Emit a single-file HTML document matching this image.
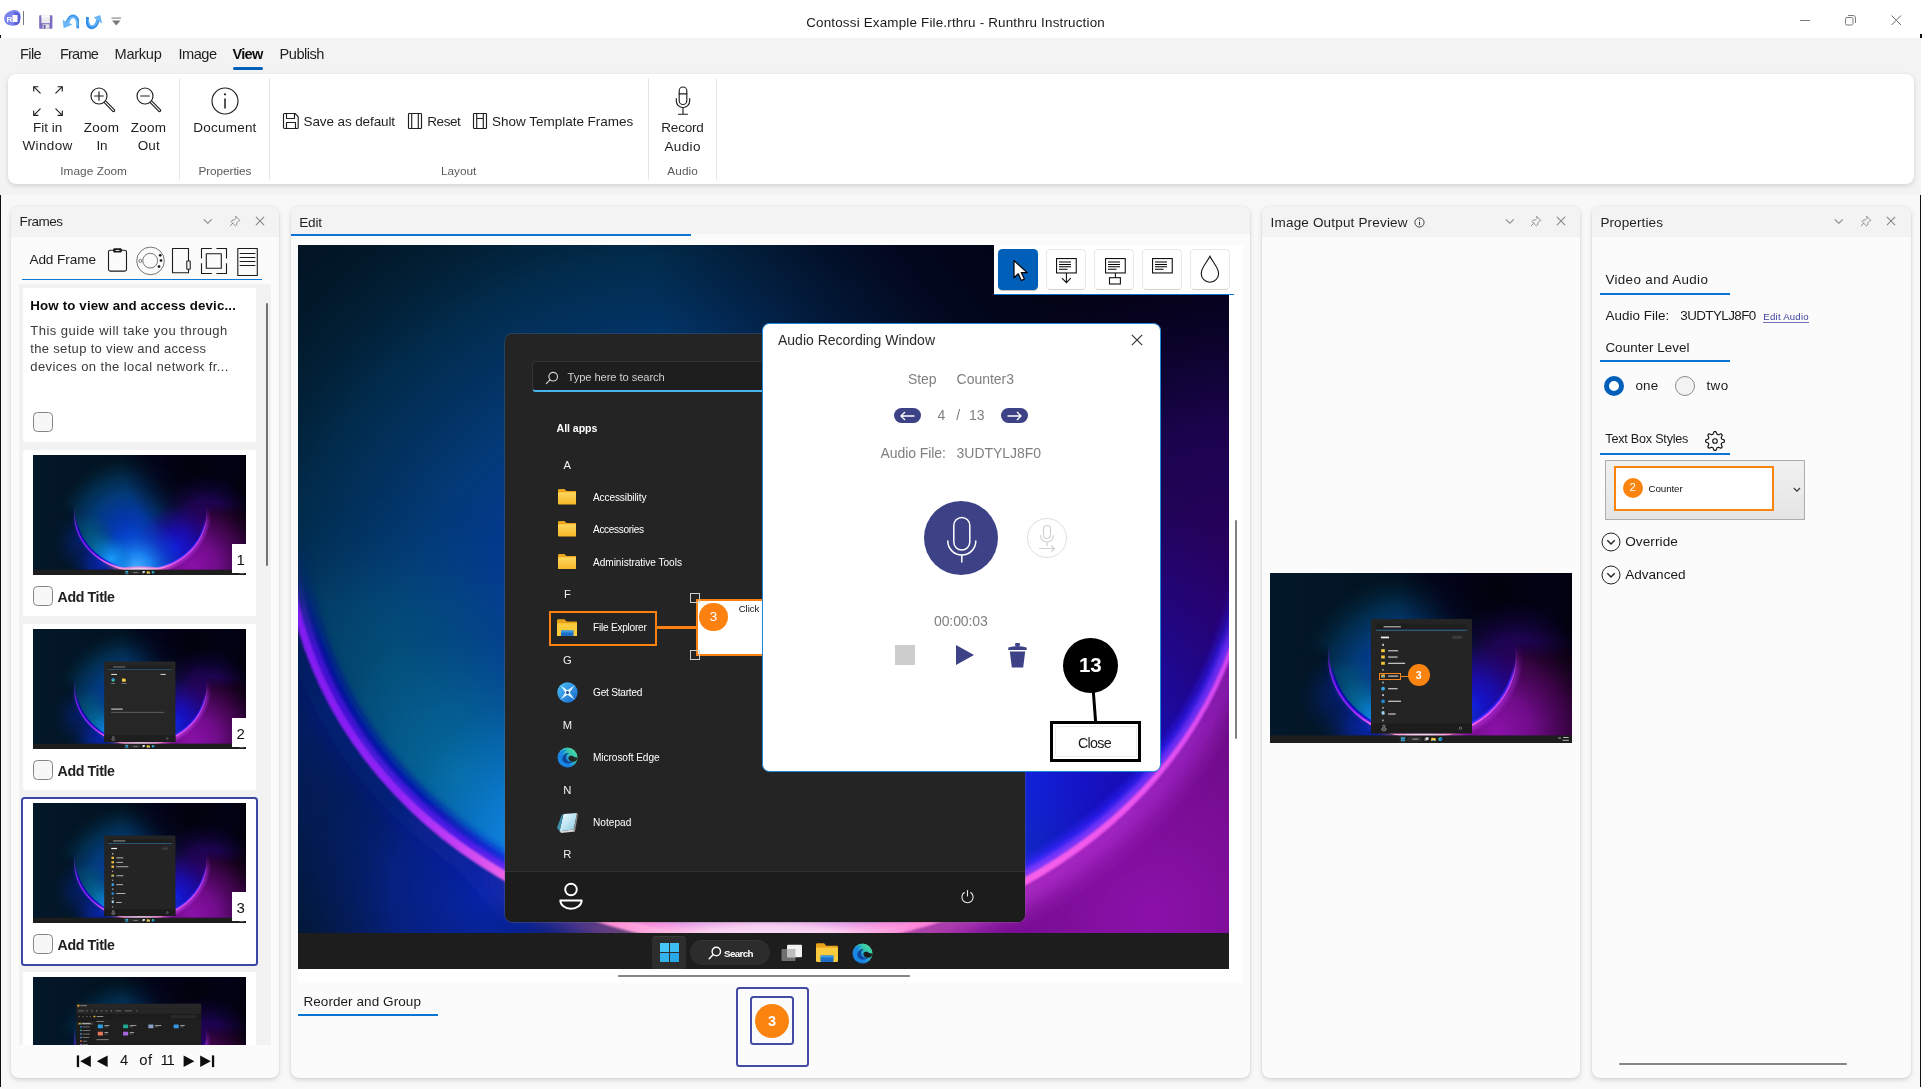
<!DOCTYPE html>
<html lang="en"><head><meta charset="utf-8"><title>Runthru Instruction</title><style>
html,body{margin:0;padding:0}
body{width:1922px;height:1089px;overflow:hidden;position:relative;background:#f3f3f3;font-family:"Liberation Sans",sans-serif;}
.t{position:absolute;white-space:nowrap;line-height:1;}
#app{position:absolute;left:0;top:0;width:1922px;height:1089px;overflow:hidden;will-change:transform;}
</style></head>
<body>
<div id="app">

<svg width="0" height="0" style="position:absolute">
<defs>
  <linearGradient id="wpBase" x1="0" y1="0" x2="1" y2="0">
    <stop offset="0" stop-color="#03182a"/><stop offset=".4" stop-color="#021322"/><stop offset=".62" stop-color="#030618"/><stop offset="1" stop-color="#020105"/>
  </linearGradient>
  <radialGradient id="wpOutL" cx="620" cy="985" r="300" gradientUnits="userSpaceOnUse">
    <stop offset="0" stop-color="#0826b0" stop-opacity=".95"/><stop offset=".4" stop-color="#06228e" stop-opacity=".8"/><stop offset=".75" stop-color="#031c58" stop-opacity=".4"/><stop offset="1" stop-color="#02162e" stop-opacity="0"/>
  </radialGradient>
  <radialGradient id="wpOutR" cx="1440" cy="1010" r="780" gradientUnits="userSpaceOnUse">
    <stop offset="0" stop-color="#8c11aa"/><stop offset=".3" stop-color="#720c8c" stop-opacity=".97"/><stop offset=".6" stop-color="#460452" stop-opacity=".8"/><stop offset="1" stop-color="#15001c" stop-opacity="0"/>
  </radialGradient>
  <radialGradient id="wpIn" cx="860" cy="700" r="700" gradientUnits="userSpaceOnUse">
    <stop offset="0" stop-color="#0434c0"/><stop offset=".25" stop-color="#0438a4"/><stop offset=".5" stop-color="#033a78"/><stop offset=".72" stop-color="#022e50" stop-opacity=".92"/><stop offset=".9" stop-color="#021f32" stop-opacity=".5"/><stop offset="1" stop-color="#021826" stop-opacity="0"/>
  </radialGradient>
  <radialGradient id="wpCy" cx="930" cy="1030" r="470" gradientUnits="userSpaceOnUse">
    <stop offset="0" stop-color="#48b4ff"/><stop offset=".3" stop-color="#1c86f6" stop-opacity=".95"/><stop offset=".65" stop-color="#0a54dc" stop-opacity=".55"/><stop offset="1" stop-color="#0446c0" stop-opacity="0"/>
  </radialGradient>
  <radialGradient id="wpTeal" cx="530" cy="820" r="240" gradientUnits="userSpaceOnUse">
    <stop offset="0" stop-color="#046c8a" stop-opacity=".8"/><stop offset=".5" stop-color="#045e88" stop-opacity=".45"/><stop offset="1" stop-color="#044c84" stop-opacity="0"/>
  </radialGradient>
  <radialGradient id="wpInd" cx="1290" cy="840" r="380" gradientUnits="userSpaceOnUse">
    <stop offset="0" stop-color="#1416dc"/><stop offset=".45" stop-color="#1a0cb4" stop-opacity=".85"/><stop offset="1" stop-color="#20048c" stop-opacity="0"/>
  </radialGradient>
  <radialGradient id="wpPur" cx="1560" cy="640" r="470" gradientUnits="userSpaceOnUse">
    <stop offset="0" stop-color="#30006c" stop-opacity=".95"/><stop offset=".5" stop-color="#22045c" stop-opacity=".8"/><stop offset="1" stop-color="#0a0330" stop-opacity="0"/>
  </radialGradient>
  <linearGradient id="wpRimC" x1="365" y1="0" x2="1570" y2="0" gradientUnits="userSpaceOnUse">
    <stop offset="0" stop-color="#7e1cf0"/><stop offset=".12" stop-color="#9222f8"/><stop offset=".175" stop-color="#c03cf6"/><stop offset=".23" stop-color="#ee62ea"/><stop offset=".33" stop-color="#ff88d4"/><stop offset=".43" stop-color="#ffd0ec"/><stop offset=".5" stop-color="#f0e6ff"/><stop offset=".57" stop-color="#ffd0ec"/><stop offset=".65" stop-color="#ff86d8"/><stop offset=".76" stop-color="#f860e8"/><stop offset=".87" stop-color="#ee56f0"/><stop offset="1" stop-color="#d044f4"/>
  </linearGradient>
  <linearGradient id="wpRimIn" x1="365" y1="0" x2="1570" y2="0" gradientUnits="userSpaceOnUse">
    <stop offset="0" stop-color="#050c94"/><stop offset=".18" stop-color="#0712bc"/><stop offset=".27" stop-color="#1430f8"/><stop offset=".34" stop-color="#4868ff"/><stop offset=".5" stop-color="#a8c8ff"/><stop offset=".66" stop-color="#5858ff"/><stop offset=".73" stop-color="#3a2cff"/><stop offset=".85" stop-color="#2a1cf0"/><stop offset="1" stop-color="#2c14d0"/>
  </linearGradient>
  <linearGradient id="wpFade" x1="0" y1="0" x2="0" y2="1080" gradientUnits="userSpaceOnUse">
    <stop offset="0" stop-color="#000"/><stop offset=".42" stop-color="#000"/><stop offset=".5" stop-color="#666"/><stop offset=".58" stop-color="#fff"/><stop offset="1" stop-color="#fff"/>
  </linearGradient>
  <linearGradient id="wpInFade" x1="0" y1="0" x2="0" y2="1080" gradientUnits="userSpaceOnUse">
    <stop offset="0" stop-color="#fff"/><stop offset=".4" stop-color="#fff"/><stop offset=".5" stop-color="#000"/><stop offset="1" stop-color="#000"/>
  </linearGradient>
  <mask id="wpInMask" maskUnits="userSpaceOnUse" x="0" y="0" width="1920" height="1080"><rect width="1920" height="1080" fill="url(#wpInFade)"/><ellipse cx="967.700" cy="526.900" rx="598" ry="521.500" fill="#fff"/></mask>
  <mask id="wpMask" maskUnits="userSpaceOnUse" x="0" y="0" width="1920" height="1080"><rect width="1920" height="1080" fill="url(#wpFade)"/></mask>
  <clipPath id="wpClip"><ellipse cx="967.700" cy="526.900" rx="598" ry="521.500"/></clipPath>
  <clipPath id="wpOutC"><path clip-rule="evenodd" d="M0 0H1920V1080H0Z M369.700 526.900A598 521.500 0 0 0 1565.700 526.900A598 521.500 0 0 0 369.700 526.900Z"/></clipPath>
  <clipPath id="wpAll"><rect width="1920" height="1080"/></clipPath>
  <filter id="wpB1" filterUnits="userSpaceOnUse" x="-100" y="-100" width="2120" height="1280"><feGaussianBlur stdDeviation="10"/></filter>
  <filter id="wpB2" filterUnits="userSpaceOnUse" x="-100" y="-100" width="2120" height="1280"><feGaussianBlur stdDeviation="1.400"/></filter>
  <filter id="wpB3" filterUnits="userSpaceOnUse" x="-100" y="-100" width="2120" height="1280"><feGaussianBlur stdDeviation="16"/></filter>
  <linearGradient id="wpRimG" x1="365" y1="0" x2="1570" y2="0" gradientUnits="userSpaceOnUse">
    <stop offset="0" stop-color="#0a20b0" stop-opacity=".25"/><stop offset=".2" stop-color="#1a24c8" stop-opacity=".3"/><stop offset=".33" stop-color="#ff88d4" stop-opacity=".6"/><stop offset=".5" stop-color="#f0e6ff" stop-opacity=".8"/><stop offset=".65" stop-color="#ff86d8" stop-opacity=".8"/><stop offset=".76" stop-color="#d040e8" stop-opacity=".85"/><stop offset="1" stop-color="#a428e0" stop-opacity=".8"/>
  </linearGradient>
  <linearGradient id="wpTealS" x1="365" y1="0" x2="1570" y2="0" gradientUnits="userSpaceOnUse">
    <stop offset="0" stop-color="#04587a" stop-opacity=".75"/><stop offset=".1" stop-color="#046a8a" stop-opacity=".9"/><stop offset=".2" stop-color="#087cb0" stop-opacity=".9"/><stop offset=".28" stop-color="#0e8cdc" stop-opacity=".75"/><stop offset=".38" stop-color="#1a98f4" stop-opacity="0"/><stop offset="1" stop-color="#1a98f4" stop-opacity="0"/>
  </linearGradient>
  <radialGradient id="wpBot" cx="968" cy="1046" r="250" gradientUnits="userSpaceOnUse" gradientTransform="translate(0 1046) scale(1 .2) translate(0 -1046)">
    <stop offset="0" stop-color="#f4ecff"/><stop offset=".45" stop-color="#ffd0f0" stop-opacity=".95"/><stop offset=".8" stop-color="#ff80d4" stop-opacity=".7"/><stop offset="1" stop-color="#f060d8" stop-opacity="0"/>
  </radialGradient>
  <filter id="wpB4" filterUnits="userSpaceOnUse" x="-100" y="-100" width="2120" height="1280"><feGaussianBlur stdDeviation="26"/></filter>
  <filter id="wpB5" filterUnits="userSpaceOnUse" x="-100" y="-100" width="2120" height="1280"><feGaussianBlur stdDeviation="5"/></filter>
  <linearGradient id="wpFadeT" x1="0" y1="0" x2="0" y2="1080" gradientUnits="userSpaceOnUse">
    <stop offset="0" stop-color="#000"/><stop offset=".5" stop-color="#000"/><stop offset=".56" stop-color="#555"/><stop offset=".63" stop-color="#fff"/><stop offset="1" stop-color="#fff"/>
  </linearGradient>
  <mask id="wpMaskT" maskUnits="userSpaceOnUse" x="0" y="0" width="1920" height="1080"><rect width="1920" height="1080" fill="url(#wpFadeT)"/></mask>
  <radialGradient id="wpT1" cx="510" cy="715" r="230" gradientUnits="userSpaceOnUse">
    <stop offset="0" stop-color="#045a7a" stop-opacity=".7"/><stop offset=".5" stop-color="#04567a" stop-opacity=".4"/><stop offset="1" stop-color="#044c78" stop-opacity="0"/>
  </radialGradient>
  <radialGradient id="wpT2" cx="585" cy="840" r="180" gradientUnits="userSpaceOnUse">
    <stop offset="0" stop-color="#0674a0" stop-opacity=".85"/><stop offset=".5" stop-color="#066c9c" stop-opacity=".5"/><stop offset="1" stop-color="#065c94" stop-opacity="0"/>
  </radialGradient>
  <radialGradient id="wpT3" cx="705" cy="935" r="200" gradientUnits="userSpaceOnUse">
    <stop offset="0" stop-color="#1c9cff" stop-opacity=".98"/><stop offset=".5" stop-color="#0e88e4" stop-opacity=".6"/><stop offset="1" stop-color="#086cc4" stop-opacity="0"/>
  </radialGradient>
  <radialGradient id="wpTopR" cx="1450" cy="100" r="640" gradientUnits="userSpaceOnUse">
    <stop offset="0" stop-color="#02020c" stop-opacity=".96"/><stop offset=".5" stop-color="#03031a" stop-opacity=".82"/><stop offset="1" stop-color="#03031a" stop-opacity="0"/>
  </radialGradient>
  <linearGradient id="wpRimV" x1="365" y1="0" x2="1570" y2="0" gradientUnits="userSpaceOnUse">
    <stop offset="0" stop-color="#4a10d8"/><stop offset=".18" stop-color="#5614ec"/><stop offset=".27" stop-color="#8a30f8"/><stop offset=".34" stop-color="#f890e0"/><stop offset=".5" stop-color="#f4e8ff"/><stop offset=".66" stop-color="#f890e4"/><stop offset=".74" stop-color="#8a3cff"/><stop offset="1" stop-color="#6a2cf4"/>
  </linearGradient>
  <filter id="wpB6" filterUnits="userSpaceOnUse" x="-100" y="-100" width="2120" height="1280"><feGaussianBlur stdDeviation="3.500"/></filter>
  <radialGradient id="wpOutL2" cx="470" cy="790" r="300" gradientUnits="userSpaceOnUse">
    <stop offset="0" stop-color="#04228c" stop-opacity=".8"/><stop offset=".45" stop-color="#032070" stop-opacity=".55"/><stop offset="1" stop-color="#021a40" stop-opacity="0"/>
  </radialGradient>
  <symbol id="wp" viewBox="0 0 1920 1080" preserveAspectRatio="none">
   <g clip-path="url(#wpAll)">
    <rect width="1920" height="1080" fill="url(#wpBase)"/>
    <g clip-path="url(#wpOutC)">
      <rect width="1920" height="1080" fill="url(#wpOutL2)"/><rect width="1920" height="1080" fill="url(#wpOutL)"/>
      <rect width="1920" height="1080" fill="url(#wpOutR)"/>
      <g mask="url(#wpMask)">
        <ellipse cx="967.700" cy="526.900" rx="606" ry="530" fill="none" stroke="url(#wpRimG)" stroke-width="26" filter="url(#wpB3)"/>
      </g>
    </g>
    <g mask="url(#wpInMask)">
      <rect width="1920" height="1080" fill="url(#wpIn)"/>
      <rect width="1920" height="1080" fill="url(#wpTopR)"/>
      <rect width="1920" height="1080" fill="url(#wpPur)"/>
      <rect width="1920" height="1080" fill="url(#wpInd)"/>
      <rect width="1920" height="1080" fill="url(#wpCy)"/>
    </g>
    <g clip-path="url(#wpClip)"><g mask="url(#wpMask)">
        <rect width="1920" height="1080" fill="url(#wpT1)"/><rect width="1920" height="1080" fill="url(#wpT2)"/><rect width="1920" height="1080" fill="url(#wpT3)"/>
        <g mask="url(#wpMaskT)"><ellipse cx="971" cy="526.900" rx="584" ry="504" fill="none" stroke="url(#wpRimIn)" stroke-width="17" filter="url(#wpB5)" opacity=".95"/>
        <ellipse cx="970" cy="526.900" rx="590.500" ry="510.500" fill="none" stroke="url(#wpRimV)" stroke-width="10" filter="url(#wpB6)"/></g>
        <rect x="600" y="960" width="740" height="120" fill="url(#wpBot)"/>
    </g></g>
    <g mask="url(#wpMask)">
      <path fill-rule="evenodd" fill="url(#wpRimC)" filter="url(#wpB2)" d="M367.700 526.900A600.250 525.500 0 0 0 1568.200 526.900A600.250 525.500 0 0 0 367.700 526.900Z M376.700 526.900A593.250 513.500 0 0 0 1563.200 526.900A593.250 513.500 0 0 0 376.700 526.900Z"/>
    </g>
   </g>
  </symbol>
</defs>
</svg>

<svg width="0" height="0" style="position:absolute"><defs>
  <symbol id="tb" viewBox="0 0 1920 1080" preserveAspectRatio="none">
    <rect x="0" y="1032" width="1920" height="48" fill="#1d1d1d"/>
    <rect x="824" y="1034" width="41" height="44" rx="5" fill="#2e2e2e"/>
    <rect x="833" y="1044" width="11" height="11" fill="#3cc2f4"/><rect x="846" y="1044" width="11" height="11" fill="#35b8f0"/><rect x="833" y="1057" width="11" height="11" fill="#2eaeea"/><rect x="846" y="1057" width="11" height="11" fill="#28a6e6"/>
    <rect x="870" y="1040" width="99" height="31" rx="15.500" fill="#2d2d2d"/>
    <rect x="905" y="1052" width="40" height="7" rx="2" fill="#8a8a8a"/>
    <rect x="982" y="1050" width="18" height="16" fill="#7d7d7d"/><rect x="990" y="1044" width="18" height="16" fill="#e6e6e6"/>
    <path d="M1026 1046h10l3 3h13v18h-26z" fill="#f0b823"/><rect x="1026" y="1052" width="26" height="15" fill="#fbd34f"/><rect x="1032" y="1061" width="14" height="6" fill="#1e73c8"/>
    <circle cx="1083" cy="1056" r="12.500" fill="#1c78d0"/><path d="M1072 1060a11 11 0 0 1 22-8c-3-5-12-5-15 0s1 11 6 11c-6 3-11 1-13-3z" fill="#46d27a"/>
    <rect x="1832" y="1046" width="18" height="5" fill="#ddd"/><rect x="1864" y="1043" width="34" height="5" fill="#ddd"/><rect x="1860" y="1060" width="40" height="5" fill="#ddd"/>
  </symbol>
  <symbol id="smA" viewBox="0 0 1920 1080" preserveAspectRatio="none">
    <rect x="642" y="292" width="642" height="726" rx="9" fill="#242424"/>
    <rect x="642" y="956" width="642" height="62" fill="#1c1c1c"/><rect x="642" y="1005" width="642" height="13" rx="9" fill="#1c1c1c"/>
    <rect x="675" y="326" width="576" height="38" rx="4" fill="#1e1e1e"/><rect x="675" y="361" width="576" height="4" fill="#3aa0dc"/>
    <rect x="722" y="337" width="110" height="9" fill="#9a9a9a"/>
    <rect x="705" y="404" width="52" height="11" fill="#f0f0f0"/><rect x="1160" y="398" width="60" height="22" rx="4" fill="#3a3a3a"/>
    <rect x="714" y="450" width="10" height="13" fill="#e0e0e0"/>
    <g fill="#f7c83c"><rect x="707" y="484" width="23" height="19"/><rect x="707" y="524" width="23" height="19"/><rect x="707" y="564" width="23" height="19"/><rect x="707" y="645" width="23" height="19"/></g>
    <rect x="711" y="656" width="15" height="8" fill="#2a7fd4"/>
    <g fill="#c4c4c4"><rect x="751" y="490" width="64" height="8"/><rect x="751" y="530" width="60" height="8"/><rect x="751" y="570" width="108" height="8"/><rect x="751" y="651" width="64" height="8"/><rect x="751" y="731" width="60" height="8"/><rect x="751" y="811" width="82" height="8"/><rect x="751" y="892" width="48" height="8"/>
      <rect x="714" y="610" width="8" height="11"/><rect x="714" y="690" width="9" height="11"/><rect x="713" y="770" width="12" height="11"/><rect x="714" y="851" width="9" height="11"/><rect x="714" y="931" width="8" height="11"/></g>
    <circle cx="719" cy="735" r="12" fill="#3aa8f0"/><circle cx="719" cy="815" r="12" fill="#1f8ad8"/><path d="M708 880l18-4 4 22-18 4z" fill="#9fd0e8"/>
    <circle cx="724" cy="975" r="8" fill="none" stroke="#fff" stroke-width="3"/><path d="M709 990h30a15 13 0 0 1-30 0z" fill="none" stroke="#fff" stroke-width="3"/>
    <circle cx="1211" cy="986" r="8" fill="none" stroke="#e0e0e0" stroke-width="2.500"/>
  </symbol>
  <symbol id="smP" viewBox="0 0 1920 1080" preserveAspectRatio="none">
    <rect x="642" y="292" width="642" height="726" rx="9" fill="#262626"/>
    <rect x="642" y="956" width="642" height="62" fill="#1e1e1e"/><rect x="642" y="1005" width="642" height="13" rx="9" fill="#1e1e1e"/>
    <rect x="675" y="326" width="576" height="38" rx="4" fill="#202020"/><rect x="675" y="361" width="576" height="4" fill="#2c86b8"/>
    <rect x="722" y="337" width="110" height="9" fill="#7a7a7a"/>
    <rect x="705" y="404" width="52" height="10" fill="#d8d8d8"/><rect x="1150" y="404" width="46" height="10" fill="#c8c8c8"/>
    <circle cx="722" cy="458" r="16" fill="#2a8fdc"/><path d="M710 462a12 12 0 0 0 24-6c-4-4-14-3-16 3z" fill="#49d080"/>
    <path d="M804 444h12l4 4h14v24h-30z" fill="#f3bf2c"/><rect x="804" y="454" width="30" height="18" fill="#fbd654"/>
    <rect x="704" y="488" width="36" height="6" fill="#9a9a9a"/><rect x="798" y="488" width="44" height="6" fill="#9a9a9a"/>
    <rect x="705" y="716" width="104" height="10" fill="#c8c8c8"/><rect x="705" y="746" width="480" height="7" fill="#6e6e6e"/>
    <circle cx="724" cy="975" r="8" fill="none" stroke="#ddd" stroke-width="3"/><path d="M709 990h30a15 13 0 0 1-30 0z" fill="none" stroke="#ddd" stroke-width="3"/>
    <circle cx="1211" cy="986" r="8" fill="none" stroke="#ccc" stroke-width="2.500"/>
  </symbol>
  <symbol id="feW" viewBox="0 0 1920 1080" preserveAspectRatio="none">
    <rect x="392" y="240" width="1124" height="800" rx="8" fill="#1f1f1f"/>
    <rect x="392" y="240" width="1124" height="40" rx="8" fill="#272727"/>
    <rect x="400" y="250" width="18" height="16" fill="#f0b823"/><rect x="426" y="254" width="60" height="8" fill="#8a8a8a"/>
    <rect x="392" y="280" width="1124" height="52" fill="#262626"/>
    <g fill="#6a6a6a"><rect x="408" y="300" width="50" height="9"/><rect x="480" y="298" width="12" height="13"/><rect x="524" y="298" width="12" height="13"/><rect x="568" y="298" width="12" height="13"/><rect x="612" y="298" width="12" height="13"/><rect x="656" y="298" width="12" height="13"/><rect x="700" y="298" width="12" height="13"/><rect x="744" y="300" width="50" height="9"/><rect x="830" y="300" width="60" height="9"/><rect x="930" y="300" width="14" height="9"/></g>
    <rect x="392" y="332" width="1124" height="48" fill="#1c1c1c"/>
    <g fill="#7a7a7a"><rect x="410" y="352" width="10" height="9"/><rect x="446" y="352" width="10" height="9"/><rect x="482" y="352" width="10" height="9"/><rect x="512" y="352" width="10" height="9"/></g>
    <rect x="546" y="349" width="16" height="14" fill="#f0b823"/><rect x="574" y="352" width="60" height="8" fill="#9a9a9a"/>
    <rect x="1240" y="344" width="230" height="26" rx="3" fill="#2a2a2a"/>
    <rect x="392" y="380" width="160" height="660" fill="#1c1c1c"/>
    <rect x="398" y="408" width="148" height="24" rx="3" fill="#3a3a3a"/><rect x="414" y="414" width="16" height="12" fill="#f0b823"/><rect x="440" y="416" width="80" height="8" fill="#c8c8c8"/>
    <g fill="#8a8a8a"><rect x="448" y="446" width="62" height="7"/><rect x="448" y="478" width="70" height="7"/><rect x="448" y="510" width="66" height="7"/><rect x="448" y="542" width="58" height="7"/><rect x="448" y="574" width="40" height="7"/><rect x="448" y="606" width="48" height="7"/><rect x="448" y="638" width="44" height="7"/></g>
    <g><rect x="424" y="442" width="16" height="13" fill="#2a8fdc"/><rect x="424" y="474" width="16" height="13" fill="#3aa0a0"/><rect x="424" y="506" width="16" height="13" fill="#6a8ad0"/><rect x="424" y="538" width="16" height="13" fill="#3a90d8"/><rect x="424" y="570" width="16" height="13" fill="#e07050"/><rect x="424" y="602" width="16" height="13" fill="#a060d8"/><rect x="424" y="634" width="16" height="13" fill="#f0b823"/></g>
    <rect x="572" y="396" width="70" height="8" fill="#8a8a8a"/>
    <rect x="584" y="428" width="46" height="34" rx="3" fill="#2a9fe0"/><rect x="644" y="432" width="44" height="7" fill="#bbb"/><rect x="644" y="446" width="30" height="6" fill="#777"/>
    <rect x="812" y="428" width="46" height="34" rx="3" fill="#20a890"/><rect x="872" y="432" width="60" height="7" fill="#bbb"/><rect x="872" y="446" width="30" height="6" fill="#777"/>
    <rect x="1040" y="428" width="46" height="34" rx="3" fill="#8aa0c8"/><rect x="1100" y="432" width="56" height="7" fill="#bbb"/><rect x="1100" y="446" width="30" height="6" fill="#777"/>
    <rect x="1268" y="428" width="46" height="34" rx="3" fill="#3a96e0"/><rect x="1328" y="432" width="40" height="7" fill="#bbb"/><rect x="1328" y="446" width="30" height="6" fill="#777"/>
    <rect x="584" y="492" width="46" height="34" rx="3" fill="#e87858"/><rect x="644" y="496" width="34" height="7" fill="#bbb"/><rect x="644" y="510" width="30" height="6" fill="#777"/>
    <rect x="812" y="492" width="46" height="34" rx="3" fill="#a868e0"/><rect x="872" y="496" width="40" height="7" fill="#bbb"/><rect x="872" y="510" width="30" height="6" fill="#777"/>
    <rect x="572" y="560" width="110" height="8" fill="#8a8a8a"/>
  </symbol>
</defs></svg>
<div style="position:absolute;left:0px;top:0px;width:1922px;height:38px;background:#fff"></div>
<svg style="position:absolute;left:3px;top:9px;" width="19" height="18" viewBox="0 0 19 18">
      <path d="M9.5 1.2c3-.9 6.6.3 7.6 3.4.9 2.6.3 5.4-.2 8-.4 2.200-2.600 3.600-4.800 3.900-2.800.4-6 .2-8.400-1.500C1.600 13.500 1 10.800 1.300 8.300 1.600 4.700 5.800 2.300 9.500 1.200z" fill="#7a84ec"/>
      <path d="M11.200 3.200c2.200-.5 4.900.3 5.700 2.600.7 2.300.3 4.900-.2 7.200-.4 1.700-2 2.800-3.700 3-1.100.1-2 .1-1.800-1z" fill="#5a62d8"/>
      <rect x="9.500" y="6" width="5" height="7" rx=".6" fill="#fff"/>
      <text x="3.600" y="12.600" font-family="Liberation Sans, sans-serif" font-size="8" font-weight="700" fill="#fff">R</text></svg>
<div style="position:absolute;left:23px;top:11px;width:1px;height:14px;background:#7a7a7a"></div>
<svg style="position:absolute;left:39.4px;top:15px;" width="14" height="14" viewBox="0 0 14 14"><rect x=".2" y=".2" width="13.200" height="13.500" rx=".8" fill="#7a6cc2"/><rect x="2.400" y=".2" width="8.500" height="8" fill="#ececec"/><rect x="2.400" y=".2" width="8.500" height="2.500" fill="#f8f8f8"/><rect x="3.600" y="9.200" width="6.800" height="4.500" fill="#e2e2e2"/><rect x="4.600" y="9.900" width="1.900" height="3.800" fill="#6a5cb0"/></svg>
<svg style="position:absolute;left:61.5px;top:14px;" width="17.5" height="15.5" viewBox="0 0 17.5 15.5"><path d="M5.500 8.300Q8 1.200 12.200 2.400Q16.600 4.200 16 12.600" fill="none" stroke="#3f98ec" stroke-width="3.600" stroke-linecap="round"/><path d="M5.600 8.600Q8.300 2.600 12 3.600Q15 5 15.300 11" fill="none" stroke="#7cc2f8" stroke-width="1.600" stroke-linecap="round"/><path d="M1.700 14.200L.6 6L10.400 10.400z" fill="#6ab6f6"/></svg>
<svg style="position:absolute;left:85.5px;top:14px;" width="17.5" height="15.5" viewBox="0 0 17.5 15.5"><path d="M11.900 6.800Q9.500 14.200 4.800 13.400Q1 12 1.300 4.400" fill="none" stroke="#2f8ce8" stroke-width="3.400" stroke-linecap="round"/><path d="M11.600 7.200Q9.300 12.600 5.200 12Q2.600 11 2.300 6" fill="none" stroke="#6cb8f6" stroke-width="1.400" stroke-linecap="round"/><path d="M14.200 1L7.600 3.400L16.200 9.800z" fill="#6ab6f6"/></svg>
<svg style="position:absolute;left:111px;top:16px;" width="11" height="10" viewBox="0 0 11 10"><rect x=".5" y="1.500" width="9.500" height="1.200" fill="#8a8a8a"/><path d="M1 4.500h8.500L5.250 9.500z" fill="#7a7a7a"/></svg>
<span id="t1" class="t " style="left:806.2px;top:15.5px;font-size:13.4px;color:#1a1a1a;letter-spacing:0.189px;">Contossi Example File.rthru - Runthru Instruction</span>
<svg style="position:absolute;left:1798px;top:12px;" width="110" height="16" viewBox="0 0 110 16"><g fill="none" stroke="#7d7d7d" stroke-width="1">
      <path d="M2 8.500h10"/>
      <rect x="47.500" y="5.500" width="7.500" height="7.500" rx="1.500"/><path d="M50 3.500h5a2.500 2.500 0 0 1 2.500 2.500v5"/>
      <path d="M93.500 3.500l9.500 9.500M103 3.500l-9.500 9.500" stroke="#6a6a6a"/></g></svg>
<div style="position:absolute;left:0px;top:38px;width:1922px;height:1051px;background:#f3f3f3"></div>
<span id="t2" class="t " style="left:20.0px;top:46.6px;font-size:14.6px;color:#1f1f1f;letter-spacing:-0.629px;">File</span>
<span id="t3" class="t " style="left:60.0px;top:46.6px;font-size:14.6px;color:#1f1f1f;letter-spacing:-0.834px;">Frame</span>
<span id="t4" class="t " style="left:114.5px;top:46.6px;font-size:14.6px;color:#1f1f1f;letter-spacing:-0.279px;">Markup</span>
<span id="t5" class="t " style="left:178.5px;top:46.6px;font-size:14.6px;color:#1f1f1f;letter-spacing:-0.512px;">Image</span>
<span id="t6" class="t " style="left:279.5px;top:46.6px;font-size:14.6px;color:#1f1f1f;letter-spacing:-0.482px;">Publish</span>
<span id="t7" class="t " style="left:232.5px;top:46.6px;font-size:14.6px;color:#101010;font-weight:700;letter-spacing:-0.750px;">View</span>
<div style="position:absolute;left:232.5px;top:67px;width:30.5px;height:2.5px;background:#005fb8;border-radius:1.5px"></div>
<div style="position:absolute;left:0px;top:195px;width:1922px;height:894px;background:#f8f8f8"></div>
<div style="position:absolute;left:8px;top:74px;width:1906px;height:110px;background:#fff;border-radius:8px;box-shadow:0 2px 5px rgba(0,0,0,.13),0 0 1px rgba(0,0,0,.08)"></div>
<svg style="position:absolute;left:30px;top:83px;" width="36" height="36" viewBox="0 0 36 36"><g fill="none" stroke="#1f1f1f" stroke-width="1.15" stroke-linecap="round" stroke-linejoin="round">
      <path d="M10.200 10.200L3.700 3.700M3.700 8V3.700H8"/>
      <path d="M25.800 10.200l6.500-6.500M28 3.700h4.300V8"/>
      <path d="M10.200 25.800l-6.500 6.500M3.700 28v4.300H8"/>
      <path d="M25.800 25.800l6.500 6.500M28 32.300h4.300V28"/></g></svg>
<span id="t8" class="t " style="left:33.0px;top:120.6px;font-size:13.5px;color:#1f1f1f;letter-spacing:0.022px;">Fit in</span>
<span id="t9" class="t " style="left:22.5px;top:139.1px;font-size:13.5px;color:#1f1f1f;letter-spacing:0.364px;">Window</span>
<svg style="position:absolute;left:89.5px;top:87px;" width="28" height="28" viewBox="0 0 28 28"><g fill="none" stroke="#1f1f1f" stroke-width="1.15" stroke-linecap="round" stroke-linejoin="round"><circle cx="9" cy="9" r="8"/><path d="M4.700 9h8.600M9 4.700v8.600"/>
          <path d="M14.300 15.600l8.300 8.600a1.100 1.100 0 0 0 1.700-1.600l-8.400-8.500"/></g></svg>
<span id="t10" class="t " style="left:83.7px;top:120.6px;font-size:13.5px;color:#1f1f1f;letter-spacing:0.271px;">Zoom</span>
<span id="t11" class="t " style="left:96.5px;top:139.1px;font-size:13.5px;color:#1f1f1f;letter-spacing:-0.233px;">In</span>
<svg style="position:absolute;left:136.4px;top:87px;" width="28" height="28" viewBox="0 0 28 28"><g fill="none" stroke="#1f1f1f" stroke-width="1.15" stroke-linecap="round" stroke-linejoin="round"><circle cx="9" cy="9" r="8"/><path d="M4.700 9h8.600"/>
          <path d="M14.300 15.600l8.300 8.600a1.100 1.100 0 0 0 1.700-1.600l-8.400-8.500"/></g></svg>
<span id="t12" class="t " style="left:130.7px;top:120.6px;font-size:13.5px;color:#1f1f1f;letter-spacing:0.271px;">Zoom</span>
<span id="t13" class="t " style="left:137.7px;top:139.1px;font-size:13.5px;color:#1f1f1f;letter-spacing:0.178px;">Out</span>
<span id="t14" class="t " style="left:60.3px;top:165.8px;font-size:11.8px;color:#5a5a5a;letter-spacing:0.047px;">Image Zoom</span>
<div style="position:absolute;left:179px;top:78px;width:1px;height:102px;background:#e6e6e6"></div>
<svg style="position:absolute;left:210px;top:86px;" width="30" height="30" viewBox="0 0 30 30"><g fill="none" stroke="#1f1f1f" stroke-width="1.15" stroke-linecap="round" stroke-linejoin="round"><circle cx="15" cy="15" r="13"/><path d="M15 13v9" stroke-width="1.500"/></g><circle cx="15" cy="8.300" r="1.100" fill="#1f1f1f"/></svg>
<span id="t15" class="t " style="left:193.3px;top:120.6px;font-size:13.5px;color:#1f1f1f;letter-spacing:0.221px;">Document</span>
<span id="t16" class="t " style="left:198.5px;top:165.8px;font-size:11.8px;color:#5a5a5a;letter-spacing:-0.088px;">Properties</span>
<div style="position:absolute;left:269px;top:78px;width:1px;height:102px;background:#e6e6e6"></div>
<svg style="position:absolute;left:282px;top:112px;" width="18" height="18" viewBox="0 0 18 18"><g fill="none" stroke="#1f1f1f" stroke-width="1.15" stroke-linecap="round" stroke-linejoin="round"><path d="M1.500 2.500a1 1 0 0 1 1-1H13l3.200 3.200V15.500a1 1 0 0 1-1 1H2.500a1 1 0 0 1-1-1z"/><path d="M4.500 1.500v5h8v-5M4.500 16.500v-6h9v6"/></g></svg>
<span id="t17" class="t " style="left:303.5px;top:114.8px;font-size:13.5px;color:#1f1f1f;letter-spacing:-0.105px;">Save as default</span>
<svg style="position:absolute;left:407px;top:112px;" width="16" height="18" viewBox="0 0 16 18"><g fill="none" stroke="#1f1f1f" stroke-width="1.15" stroke-linecap="round" stroke-linejoin="round"><rect x="1.500" y="1.500" width="13" height="15" rx=".8"/><path d="M4.700 1.500v15M11.300 1.500v15"/></g></svg>
<span id="t18" class="t " style="left:427.3px;top:114.8px;font-size:13.5px;color:#1f1f1f;letter-spacing:-0.456px;">Reset</span>
<svg style="position:absolute;left:472px;top:112px;" width="16" height="18" viewBox="0 0 16 18"><g fill="none" stroke="#1f1f1f" stroke-width="1.15" stroke-linecap="round" stroke-linejoin="round"><rect x="1.500" y="1.500" width="13" height="15" rx=".8"/><path d="M4.700 1.500v15M11.300 1.500v15M4.700 6.500h6.600"/></g></svg>
<span id="t19" class="t " style="left:492.0px;top:114.8px;font-size:13.5px;color:#1f1f1f;letter-spacing:-0.013px;">Show Template Frames</span>
<span id="t20" class="t " style="left:441.0px;top:165.8px;font-size:11.8px;color:#5a5a5a;letter-spacing:-0.020px;">Layout</span>
<div style="position:absolute;left:647.5px;top:78px;width:1px;height:102px;background:#e6e6e6"></div>
<svg style="position:absolute;left:673px;top:85px;" width="20" height="32" viewBox="0 0 20 32"><g fill="none" stroke="#1f1f1f" stroke-width="1.15" stroke-linecap="round" stroke-linejoin="round"><rect x="6.200" y="2" width="7.600" height="17.500" rx="3.800"/><path d="M6.200 8.800h7.600"/><path d="M3.300 13.500v2.300a6.700 6.700 0 0 0 13.400 0v-2.300M10 22.500v6.700M5.500 29.200h9"/></g></svg>
<span id="t21" class="t " style="left:661.3px;top:120.8px;font-size:13.5px;color:#1f1f1f;letter-spacing:-0.189px;">Record</span>
<span id="t22" class="t " style="left:664.4px;top:139.6px;font-size:13.5px;color:#1f1f1f;letter-spacing:0.374px;">Audio</span>
<span id="t23" class="t " style="left:667.3px;top:165.8px;font-size:11.8px;color:#5a5a5a;letter-spacing:0.102px;">Audio</span>
<div style="position:absolute;left:716px;top:78px;width:1px;height:102px;background:#e6e6e6"></div><div style="position:absolute;left:11px;top:206px;width:268px;height:872px;background:#fbfbfb;border-radius:8px;box-shadow:0 2px 5px rgba(0,0,0,.14),0 0 1.500px rgba(0,0,0,.10)"></div>
<div style="position:absolute;left:11px;top:206px;width:268px;height:30.5px;background:#f3f3f3;border-radius:8px 8px 0 0"></div>
<span id="t24" class="t " style="left:19.6px;top:215.3px;font-size:13.5px;color:#1f1f1f;letter-spacing:-0.461px;">Frames</span>
<svg style="position:absolute;left:203px;top:217.5px;" width="10" height="7" viewBox="0 0 10 7"><path d="M.8 1.300L4.800 5.300 8.800 1.300" fill="none" stroke="#878787" stroke-width="1.100"/></svg><svg style="position:absolute;left:228.5px;top:215px;" width="12" height="12" viewBox="0 0 12 12"><g fill="none" stroke="#878787" stroke-width=".9" stroke-linejoin="round"><path d="M6.600 1.200l4.200 4.200-1.100.5-1.700 1.700-.4 2.400-1.300.9L2.100 6.600l.9-1.300 2.400-.4L7.100 3.200z"/><path d="M4.200 7.800L1 11"/></g></svg><svg style="position:absolute;left:255px;top:216px;" width="10" height="10" viewBox="0 0 10 10"><path d="M.9.900l8.200 8.200M9.100.9L.9 9.100" fill="none" stroke="#878787" stroke-width="1.050"/></svg>
<span id="t25" class="t " style="left:29.4px;top:253.2px;font-size:13.6px;color:#1b1b1b;letter-spacing:-0.072px;">Add Frame</span>
<svg style="position:absolute;left:107px;top:247px;" width="22" height="26" viewBox="0 0 22 26"><g fill="none" stroke="#1b1b1b" stroke-width="1.100" stroke-linejoin="round"><rect x="1.500" y="3.300" width="18" height="20.800" rx="1.800"/><rect x="6.800" y="1.900" width="7.400" height="3" rx=".5" fill="#1b1b1b"/><rect x="8.600" y="3" width="3.800" height=".9" fill="#fff" stroke="none"/></g></svg>
<svg style="position:absolute;left:134.5px;top:246px;" width="31" height="30" viewBox="0 0 31 30"><g fill="none" stroke="#4a4a4a" stroke-width=".75"><circle cx="15.500" cy="14.900" r="13.800"/><circle cx="15.200" cy="14.700" r="7.400"/><circle cx="5.400" cy="14.900" r="1.500"/></g><g fill="#111"><circle cx="25.200" cy="9.300" r="1.350"/><circle cx="26" cy="14.500" r="1.350"/><circle cx="24" cy="20.600" r="1.350"/></g></svg>
<svg style="position:absolute;left:171px;top:247px;" width="22" height="27" viewBox="0 0 22 27"><g fill="none" stroke="#1b1b1b" stroke-width="1.100" stroke-linejoin="round"><path d="M17.500 14V1.500H1.500v24.200h16V21.500"/><rect x="15.800" y="14" width="3.400" height="8.300" rx=".5" fill="#fff"/></g></svg>
<svg style="position:absolute;left:200px;top:247px;" width="28" height="28" viewBox="0 0 28 28"><g fill="none" stroke="#1b1b1b" stroke-width="1.100" stroke-linejoin="round"><rect x="6.300" y="6.800" width="15" height="14.500"/><path d="M1.500 11.600v-10.100h10.300M16.400 1.500h10.100v10.100M26.500 16.200v10.300h-10.100M11.800 26.500h-10.300v-10.300"/></g></svg>
<svg style="position:absolute;left:235.7px;top:247px;" width="23" height="30" viewBox="0 0 23 30"><g fill="none" stroke="#1b1b1b" stroke-width="1.100" stroke-linejoin="round"><rect x="1.800" y="1.500" width="19.500" height="27"/><path d="M3.700 6.400h15.700M3.700 10.500h15.700M3.700 14.500h15.700M3.700 18.400h15.700" stroke-width="1.050"/></g></svg>
<div style="position:absolute;left:22px;top:279px;width:240px;height:1.3px;background:#0a7ad6"></div>
<div style="position:absolute;left:19px;top:284px;width:252px;height:761px;background:#f2f2f2"></div>
<div style="position:absolute;left:23px;top:288px;width:233.3px;height:154px;background:#fff;border-radius:2px"></div>
<span id="t26" class="t " style="left:30.3px;top:298.5px;font-size:13.3px;color:#0a0a0a;font-weight:700;letter-spacing:0.151px;">How to view and access devic...</span>
<span id="t27" class="t " style="left:30.3px;top:323.5px;font-size:13px;color:#3a3a3a;letter-spacing:0.481px;">This guide will take you through</span>
<span id="t28" class="t " style="left:30.3px;top:342.0px;font-size:13px;color:#3a3a3a;letter-spacing:0.324px;">the setup to view and access</span>
<span id="t29" class="t " style="left:30.3px;top:360.4px;font-size:13px;color:#3a3a3a;letter-spacing:0.398px;">devices on the local network fr...</span>
<div style="position:absolute;left:33px;top:412.2px;width:18.2px;height:18.2px;border:1px solid #858585;border-radius:4.500px;background:#f7f7f7"></div>
<div style="position:absolute;left:266.3px;top:303px;width:2.2px;height:262.6px;background:#727272;border-radius:1px"></div>
<div style="position:absolute;left:23px;top:450px;width:233.3px;height:166px;background:#fff;border-radius:2px"></div>
<div style="position:absolute;left:33px;top:455px;width:213px;height:120px;overflow:hidden;background:#03101c"><svg width="213" height="120" style="position:absolute;left:0;top:0"><use href="#wp" width="213" height="120"/><use href="#tb" width="213" height="120"/></svg><div style="position:absolute;right:0;bottom:2.300px;width:14.200px;height:28.500px;background:#fff"></div></div><span id="t30" class="t " style="left:236.4px;top:551.9px;font-size:15px;color:#111;">1</span>
<div style="position:absolute;left:33px;top:586.3px;width:18.2px;height:18.2px;border:1px solid #858585;border-radius:4.500px;background:#f7f7f7"></div>
<span id="t31" class="t " style="left:57.6px;top:590.0px;font-size:14.2px;color:#202020;font-weight:700;letter-spacing:-0.382px;">Add Title</span>
<div style="position:absolute;left:23px;top:624px;width:233.3px;height:166px;background:#fff;border-radius:2px"></div>
<div style="position:absolute;left:33px;top:629px;width:213px;height:120px;overflow:hidden;background:#03101c"><svg width="213" height="120" style="position:absolute;left:0;top:0"><use href="#wp" width="213" height="120"/><use href="#smP" width="213" height="120"/><use href="#tb" width="213" height="120"/></svg><div style="position:absolute;right:0;bottom:2.300px;width:14.200px;height:28.500px;background:#fff"></div></div><span id="t32" class="t " style="left:236.4px;top:725.9px;font-size:15px;color:#111;">2</span>
<div style="position:absolute;left:33px;top:760.3px;width:18.2px;height:18.2px;border:1px solid #858585;border-radius:4.500px;background:#f7f7f7"></div>
<span id="t33" class="t " style="left:57.6px;top:764.0px;font-size:14.2px;color:#202020;font-weight:700;letter-spacing:-0.382px;">Add Title</span>
<div style="position:absolute;left:21.3px;top:796.7px;width:236.7px;height:169px;background:#fff;border:2px solid #3c48a6;border-radius:3.500px;box-sizing:border-box"></div>
<div style="position:absolute;left:33px;top:803px;width:213px;height:120px;overflow:hidden;background:#03101c"><svg width="213" height="120" style="position:absolute;left:0;top:0"><use href="#wp" width="213" height="120"/><use href="#smA" width="213" height="120"/><use href="#tb" width="213" height="120"/></svg><div style="position:absolute;right:0;bottom:2.300px;width:14.200px;height:28.500px;background:#fff"></div></div><span id="t34" class="t " style="left:236.4px;top:899.9px;font-size:15px;color:#111;">3</span>
<div style="position:absolute;left:33px;top:934.3px;width:18.2px;height:18.2px;border:1px solid #858585;border-radius:4.500px;background:#f7f7f7"></div>
<span id="t35" class="t " style="left:57.6px;top:938.0px;font-size:14.2px;color:#202020;font-weight:700;letter-spacing:-0.382px;">Add Title</span>
<div style="position:absolute;left:23px;top:972px;width:233.3px;height:73px;background:#fff;border-radius:2px 2px 0 0"></div>
<div style="position:absolute;left:33px;top:977px;width:213px;height:68px;overflow:hidden;background:#03101c"><svg width="213" height="120" style="position:absolute;left:0;top:0"><use href="#wp" width="213" height="120"/><use href="#feW" width="213" height="120"/><use href="#tb" width="213" height="120"/></svg></div>
<svg style="position:absolute;left:76px;top:1054px;" width="140" height="15" viewBox="0 0 140 15"><g fill="#0d0d0d"><rect x=".8" y="1.400" width="2.300" height="11.700"/><path d="M14.800 1.400v11.700L4.200 7.250z"/>
      <path d="M31.600 1.600v11.300L20.800 7.250z"/>
      <path d="M107.600 1.600v11.300l10.800-5.650z"/>
      <path d="M124.200 1.400v11.700l10.600-5.850z"/><rect x="135.900" y="1.400" width="2.300" height="11.700"/></g></svg>
<span id="t36" class="t " style="left:120.0px;top:1053.3px;font-size:14.8px;color:#111;letter-spacing:-0.234px;">4</span>
<span id="t37" class="t " style="left:139.3px;top:1053.3px;font-size:14.8px;color:#111;letter-spacing:0.378px;">of</span>
<span id="t38" class="t " style="left:160.6px;top:1053.3px;font-size:14.8px;color:#111;letter-spacing:-1.188px;">11</span><div style="position:absolute;left:291px;top:205.5px;width:959px;height:872px;background:#fbfbfb;border-radius:8px;box-shadow:0 2px 5px rgba(0,0,0,.14),0 0 1.500px rgba(0,0,0,.10)"></div>
<div style="position:absolute;left:291px;top:205.5px;width:959px;height:28.5px;background:#f3f3f3;border-radius:8px 8px 0 0"></div>
<div style="position:absolute;left:291px;top:234px;width:400px;height:2px;background:#0a74d2"></div>
<span id="t39" class="t " style="left:299.2px;top:215.5px;font-size:13.6px;color:#1f1f1f;letter-spacing:-0.159px;">Edit</span>
<div style="position:absolute;left:298px;top:245px;width:931px;height:723.5px;overflow:hidden;background:#02101e"><svg style="position:absolute;left:-313px;top:-148px" width="1555" height="875"><use href="#wp" width="1555" height="875"/></svg><div style="position:absolute;left:0px;top:688.3px;width:931px;height:40px;background:#1d1d1d"></div><div style="position:absolute;left:354.3px;top:690.5px;width:33.5px;height:34px;background:#2d2d2d;border-radius:4px;border-top:1px solid #3a3a3a"></div><svg style="position:absolute;left:361.5px;top:698px;" width="19" height="19" viewBox="0 0 19 19"><rect x="0" y="0" width="9" height="9" fill="#45c6f6"/><rect x="10" y="0" width="9" height="9" fill="#3dbdf2"/><rect x="0" y="10" width="9" height="9" fill="#33b2ec"/><rect x="10" y="10" width="9" height="9" fill="#2aa8e6"/></svg><div style="position:absolute;left:391.8px;top:694.8px;width:80px;height:25.2px;background:#2c2c2c;border-radius:12.600px;border-top:1px solid #363636;box-sizing:border-box"></div><svg style="position:absolute;left:409.5px;top:700.5px;" width="14" height="14" viewBox="0 0 14 14"><g fill="none" stroke="#fff" stroke-width="1.400" stroke-linecap="round"><circle cx="8.300" cy="5.500" r="4.200"/><path d="M5.300 8.600L1.200 12.700"/></g></svg><span id="t40" class="t " style="left:426.0px;top:703.5px;font-size:9.8px;color:#fff;font-weight:700;letter-spacing:-0.648px;">Search</span><svg style="position:absolute;left:482.5px;top:698.5px;" width="22" height="18" viewBox="0 0 22 18"><rect x=".5" y="5" width="14" height="12" rx="1" fill="#6f6f6f"/><rect x="6" y=".8" width="15" height="12.500" rx="1" fill="#f2f2f2"/><rect x="6" y="5" width="8.500" height="8.300" fill="#bdbdbd"/></svg><svg style="position:absolute;left:518px;top:698px;" width="22" height="19" viewBox="0 0 22 19"><path d="M0 1.500Q0 .3 1.200 .3H8l2.300 2.400H20.800Q22 2.700 22 3.900V6H0z" fill="#e8a21a"/><rect x="0" y="4.500" width="22" height="14.500" rx="1.200" fill="#fbcb3e"/><rect x="4.500" y="12.500" width="13" height="6.500" rx="1" fill="#1c6fc4"/><rect x="4.500" y="12.500" width="13" height="2" fill="#3a9be8"/></svg><svg style="position:absolute;left:554px;top:697.5px;" width="21" height="21" viewBox="0 0 21 21"><defs><linearGradient id="eg" x1="1" y1="0" x2="0" y2="1"><stop offset="0" stop-color="#58e898"/><stop offset=".38" stop-color="#30c0b0"/><stop offset=".6" stop-color="#1e90e8"/><stop offset="1" stop-color="#0c54b4"/></linearGradient></defs><circle cx="10.500" cy="10.500" r="10" fill="url(#eg)"/><path d="M1 12C.8 6 5.500 2.200 10.500 2.500 6.500 4 4.800 7.500 5.600 11.200c.8 3.800 4.400 6.300 8.600 6-4.800 3.800-12.600 1.600-13.200-5.200z" fill="#1a86e4"/><path d="M5.400 12.400c-.3-3.900 2.700-6.700 6.700-6.300-2.100.9-3.300 2.900-2.900 5.100.5 2.700 3.200 4.300 6.400 3.800-2.800 2.600-9.700 1.800-10.200-2.600z" fill="#0f469c"/><path d="M20.500 10.800c-.2 2.400-1.800 3.900-4.200 4-2.100.1-4-1-4.700-2.600-.5-1.300 0-2.600 1.200-3.200 1.500-.7 3.300-.2 4.200 1.100z" fill="#1d1d1d"/></svg><div style="position:absolute;left:206.8px;top:89px;width:520.4px;height:588px;background:#242424;border-radius:7.500px;box-shadow:0 0 0 1px rgba(120,120,120,.28)"></div><div style="position:absolute;left:206.8px;top:626.2px;width:520.4px;height:50.8px;background:#1c1c1c;border-radius:0 0 7.500px 7.500px;border-top:1px solid #303030;box-sizing:border-box"></div><div style="position:absolute;left:233.7px;top:116.3px;width:466.6px;height:31.2px;background:#1e1e1e;border-radius:4px;border:1px solid #343434;border-bottom:2px solid #4cb4ec;box-sizing:border-box"></div><svg style="position:absolute;left:246.5px;top:125.5px;" width="14" height="14" viewBox="0 0 14 14"><g fill="none" stroke="#d8d8d8" stroke-width="1.150" stroke-linecap="round"><circle cx="8.200" cy="5.700" r="4.300"/><path d="M5.100 8.900L1.300 12.700"/></g></svg><span id="t41" class="t " style="left:269.6px;top:126.5px;font-size:11.2px;color:#cfcfcf;letter-spacing:-0.094px;">Type here to search</span><span id="t42" class="t " style="left:258.6px;top:178.0px;font-size:10.6px;color:#fff;font-weight:700;letter-spacing:-0.052px;">All apps</span><span id="t43" class="t " style="left:269.3px;top:214.9px;font-size:11.2px;color:#f2f2f2;transform:translateX(-50%);">A</span><span id="t44" class="t " style="left:269.3px;top:344.1px;font-size:11.2px;color:#f2f2f2;transform:translateX(-50%);">F</span><span id="t45" class="t " style="left:269.3px;top:409.5px;font-size:11.2px;color:#f2f2f2;transform:translateX(-50%);">G</span><span id="t46" class="t " style="left:269.3px;top:474.5px;font-size:11.2px;color:#f2f2f2;transform:translateX(-50%);">M</span><span id="t47" class="t " style="left:269.3px;top:539.5px;font-size:11.2px;color:#f2f2f2;transform:translateX(-50%);">N</span><span id="t48" class="t " style="left:269.3px;top:604.2px;font-size:11.2px;color:#f2f2f2;transform:translateX(-50%);">R</span><svg style="position:absolute;left:259.79999999999995px;top:244px;" width="18.6" height="15.5" viewBox="0 0 18.6 15.5"><defs><linearGradient id="fg" x1="0" y1="0" x2="0" y2="1"><stop offset="0" stop-color="#ffd75e"/><stop offset="1" stop-color="#f5b72a"/></linearGradient></defs>
      <path d="M0 1.200Q0 0 1.200 0H6.500L8.500 2H17.400Q18.600 2 18.600 3.200V5H0z" fill="#e9a51c"/><rect x="0" y="3.200" width="18.600" height="12.300" rx="1.200" fill="url(#fg)"/></svg><span id="t49" class="t " style="left:295.0px;top:247.7px;font-size:10.1px;color:#fff;letter-spacing:-0.128px;">Accessibility</span><svg style="position:absolute;left:259.79999999999995px;top:276.29999999999995px;" width="18.6" height="15.5" viewBox="0 0 18.6 15.5"><defs><linearGradient id="fg" x1="0" y1="0" x2="0" y2="1"><stop offset="0" stop-color="#ffd75e"/><stop offset="1" stop-color="#f5b72a"/></linearGradient></defs>
      <path d="M0 1.200Q0 0 1.200 0H6.500L8.500 2H17.400Q18.600 2 18.600 3.200V5H0z" fill="#e9a51c"/><rect x="0" y="3.200" width="18.600" height="12.300" rx="1.200" fill="url(#fg)"/></svg><span id="t50" class="t " style="left:295.0px;top:280.4px;font-size:10.1px;color:#fff;letter-spacing:-0.338px;">Accessories</span><svg style="position:absolute;left:259.79999999999995px;top:308.70000000000005px;" width="18.6" height="15.5" viewBox="0 0 18.6 15.5"><defs><linearGradient id="fg" x1="0" y1="0" x2="0" y2="1"><stop offset="0" stop-color="#ffd75e"/><stop offset="1" stop-color="#f5b72a"/></linearGradient></defs>
      <path d="M0 1.200Q0 0 1.200 0H6.500L8.500 2H17.400Q18.600 2 18.600 3.200V5H0z" fill="#e9a51c"/><rect x="0" y="3.200" width="18.600" height="12.300" rx="1.200" fill="url(#fg)"/></svg><span id="t51" class="t " style="left:295.0px;top:312.5px;font-size:10.1px;color:#fff;letter-spacing:-0.034px;">Administrative Tools</span><svg style="position:absolute;left:258.5px;top:373.5px;" width="20.5" height="17.5" viewBox="0 0 20.5 17.5"><path d="M0 1.500Q0 .3 1.200 .3H7.500l2.200 2.300H19.300Q20.500 2.600 20.500 3.800V6H0z" fill="#e8a21a"/><rect x="0" y="4.200" width="20.500" height="13.300" rx="1.200" fill="#fbcb3e"/><rect x="4" y="11.500" width="12.500" height="6" rx="1" fill="#1c6fc4"/><rect x="4" y="11.500" width="12.500" height="2" fill="#3a9be8"/></svg><span id="t52" class="t " style="left:295.0px;top:378.0px;font-size:10.1px;color:#fff;letter-spacing:-0.235px;">File Explorer</span><svg style="position:absolute;left:258.8px;top:436.8px;" width="21" height="21" viewBox="0 0 21 21"><defs><linearGradient id="gs" x1="0" y1="0" x2="1" y2="1"><stop offset="0" stop-color="#4cc0fa"/><stop offset="1" stop-color="#1668c8"/></linearGradient></defs><circle cx="10.500" cy="10.500" r="10.200" fill="url(#gs)"/><path d="M10.500 10.500L3.600 3.600 9 9.300 10.500 7.800 12 9.300 17.400 3.600z" fill="#fff"/><path d="M10.500 10.500L17.400 3.600 11.700 9 13.200 10.500 11.700 12 17.400 17.400z" fill="#b4e0ff"/><path d="M10.500 10.500L17.400 17.400 12 11.700 10.500 13.200 9 11.700 3.600 17.400z" fill="#fff"/><path d="M10.500 10.500L3.600 17.400 9.300 12 7.800 10.500 9.300 9 3.600 3.600z" fill="#b4e0ff"/><path d="M3.600 3.600L10.500 8.300 17.400 3.600 12.700 10.500 17.400 17.400 10.500 12.700 3.600 17.400 8.300 10.500z" fill="#e8f6ff"/><circle cx="10.500" cy="10.500" r="1.500" fill="#1c4a94"/></svg><span id="t53" class="t " style="left:295.0px;top:442.7px;font-size:10.1px;color:#fff;letter-spacing:-0.220px;">Get Started</span><svg style="position:absolute;left:258.8px;top:501.8px;" width="21" height="21" viewBox="0 0 21 21"><circle cx="10.500" cy="10.500" r="10" fill="url(#eg)"/><path d="M1 12C.8 6 5.500 2.200 10.500 2.500 6.500 4 4.800 7.500 5.600 11.200c.8 3.800 4.400 6.300 8.600 6-4.800 3.800-12.600 1.600-13.200-5.200z" fill="#1a86e4"/><path d="M5.400 12.400c-.3-3.900 2.700-6.700 6.700-6.300-2.100.9-3.300 2.900-2.900 5.100.5 2.700 3.200 4.300 6.400 3.800-2.800 2.600-9.700 1.800-10.200-2.600z" fill="#0f469c"/><path d="M20.500 10.800c-.2 2.400-1.800 3.900-4.200 4-2.100.1-4-1-4.700-2.600-.5-1.300 0-2.600 1.200-3.200 1.500-.7 3.300-.2 4.200 1.100z" fill="#242424"/></svg><span id="t54" class="t " style="left:295.0px;top:507.7px;font-size:10.1px;color:#fff;letter-spacing:-0.059px;">Microsoft Edge</span><svg style="position:absolute;left:257.5px;top:566.5px;" width="23" height="22" viewBox="0 0 23 22"><defs><linearGradient id="np" x1="0" y1="0" x2="1" y2="1"><stop offset="0" stop-color="#f4fcff"/><stop offset=".5" stop-color="#bfe6f4"/><stop offset="1" stop-color="#86c4de"/></linearGradient></defs><path d="M7.500 2L21 1 17.800 17.600 3.500 19.200z" fill="url(#np)"/><path d="M7.500 2L3.500 19.200 1 15.800 5.600 3.200z" fill="#3f8eae"/><path d="M3.500 19.200L17.800 17.600 19 19.400 5.200 21z" fill="#d8d8d8"/><path d="M17.800 17.600L21 1l.9 1.800L19 19.400z" fill="#8c8c8c"/></svg><span id="t55" class="t " style="left:295.0px;top:572.7px;font-size:10.1px;color:#fff;letter-spacing:0.018px;">Notepad</span><svg style="position:absolute;left:259.5px;top:637px;" width="27" height="29" viewBox="0 0 27 29"><g fill="none" stroke="#fff" stroke-width="1.900"><circle cx="13" cy="7.500" r="5.800"/><path d="M2.300 18.500h21.400a10.700 8.200 0 0 1-21.400 0z" stroke-linejoin="round"/></g></svg><svg style="position:absolute;left:661.5px;top:644px;" width="15" height="15" viewBox="0 0 15 15"><g fill="none" stroke="#e8e8e8" stroke-width="1.100" stroke-linecap="round"><path d="M7.500 1.500v5.500"/><path d="M4.300 3.500a5.600 5.600 0 1 0 6.400 0"/></g></svg><div style="position:absolute;left:250.5px;top:365.7px;width:108.2px;height:35.1px;border:2px solid #fd8110;box-sizing:border-box"></div><div style="position:absolute;left:358.7px;top:381.4px;width:40px;height:2.6px;background:#fd8110"></div><div style="position:absolute;left:398px;top:354px;width:110px;height:57px;background:#fff;border:2.300px solid #fd8110;box-sizing:border-box"></div><div style="position:absolute;left:392px;top:347.8px;width:10px;height:10.2px;border:1.300px solid #cdcdcd;box-sizing:border-box"></div><div style="position:absolute;left:392px;top:404.8px;width:10px;height:10.2px;border:1.300px solid #cdcdcd;box-sizing:border-box"></div><div style="position:absolute;left:401.1px;top:357.6px;width:28.9px;height:28.9px;background:#fd8110;border-radius:50%"></div><span id="t56" class="t " style="left:415.6px;top:365.3px;font-size:13.6px;color:#fff;transform:translateX(-50%);">3</span><span id="t57" class="t " style="left:440.7px;top:358.7px;font-size:9.6px;color:#111;letter-spacing:-0.059px;">Click</span><div style="position:absolute;left:463.6px;top:78.4px;width:399px;height:449px;background:#fff;border:1px solid #1e88d6;border-radius:7.500px;box-sizing:border-box"></div><span id="t58" class="t " style="left:480.0px;top:87.8px;font-size:14px;color:#2a2a2a;letter-spacing:-0.009px;">Audio Recording Window</span><svg style="position:absolute;left:833px;top:89px;" width="12" height="12" viewBox="0 0 12 12"><path d="M.8.800l10.400 10.400M11.200.8L.8 11.200" stroke="#333" stroke-width="1.150" fill="none"/></svg><span id="t59" class="t " style="left:610.0px;top:126.9px;font-size:14px;color:#808080;letter-spacing:-0.103px;">Step</span><span id="t60" class="t " style="left:658.6px;top:126.9px;font-size:14px;color:#808080;letter-spacing:-0.024px;">Counter3</span><div style="position:absolute;left:595.8px;top:163px;width:27.2px;height:15px;background:#3d4287;border-radius:7.500px"></div><svg style="position:absolute;left:601px;top:165.5px;" width="17" height="10" viewBox="0 0 17 10"><path d="M15.500 5H2M6 1L2 5l4 4" fill="none" stroke="#fff" stroke-width="1.300"/></svg><div style="position:absolute;left:703px;top:163px;width:27px;height:15px;background:#3d4287;border-radius:7.500px"></div><svg style="position:absolute;left:708px;top:165.5px;" width="17" height="10" viewBox="0 0 17 10"><path d="M1.500 5H15M11 1l4 4-4 4" fill="none" stroke="#fff" stroke-width="1.300"/></svg><span id="t61" class="t " style="left:639.5px;top:163.1px;font-size:14px;color:#808080;">4</span><span id="t62" class="t " style="left:658.3px;top:163.1px;font-size:14px;color:#808080;">/</span><span id="t63" class="t " style="left:671.0px;top:163.1px;font-size:14px;color:#808080;letter-spacing:0.011px;">13</span><span id="t64" class="t " style="left:582.6px;top:200.9px;font-size:14px;color:#808080;letter-spacing:-0.087px;">Audio File:</span><span id="t65" class="t " style="left:658.6px;top:200.9px;font-size:14px;color:#808080;letter-spacing:-0.041px;">3UDTYLJ8F0</span><div style="position:absolute;left:626px;top:256px;width:74px;height:74px;background:#3d4287;border-radius:50%"></div><svg style="position:absolute;left:642px;top:267px;" width="42" height="52" viewBox="0 0 42 52"><g fill="none" stroke="#fff" stroke-width="1.500" stroke-linecap="round"><rect x="13.800" y="5.500" width="16" height="32.500" rx="8"/><path d="M7.800 29a14 14 0 0 0 28 0M21.800 43v7"/></g></svg><div style="position:absolute;left:729px;top:273px;width:40px;height:40px;border:1px solid #dedede;border-radius:50%;box-sizing:border-box"></div><svg style="position:absolute;left:737px;top:278px;" width="24" height="30" viewBox="0 0 24 30"><g fill="none" stroke="#d0d0d0" stroke-width="1.200" stroke-linecap="round"><rect x="8.500" y="2.500" width="7" height="13" rx="3.500"/><path d="M5.500 12.500a6.500 6.500 0 0 0 13 0M12 19v3.500M4.500 25.500h15M16.500 22.800l3 2.700-3 2.700"/></g></svg><span id="t66" class="t " style="left:636.0px;top:368.9px;font-size:14px;color:#808080;letter-spacing:-0.100px;">00:00:03</span><div style="position:absolute;left:597px;top:400px;width:20px;height:20px;background:#cdcdcd"></div><svg style="position:absolute;left:658px;top:400px;" width="18" height="20" viewBox="0 0 18 20"><path d="M0 0l18 10L0 20z" fill="#3d4287"/></svg><svg style="position:absolute;left:709.5px;top:397.5px;" width="19" height="25" viewBox="0 0 19 25"><g fill="#3d4287"><rect x="7" y="0" width="5" height="3" rx="1.200"/><path d="M.3 4.500Q9.500 1.500 18.700 4.500V7H.3z"/><path d="M1.800 8.500h15.400l-2 16H3.800z"/></g></svg><svg style="position:absolute;left:790px;top:445px;" width="12" height="34" viewBox="0 0 12 34"><path d="M5.200 0L7.700 33" stroke="#000" stroke-width="3" fill="none"/></svg><div style="position:absolute;left:764.6px;top:392.9px;width:55.4px;height:55.4px;background:#000;border-radius:50%"></div><span id="t67" class="t " style="left:792.3px;top:410.2px;font-size:20.5px;color:#fff;font-weight:700;transform:translateX(-50%);">13</span><div style="position:absolute;left:752.2px;top:476.3px;width:91px;height:40.5px;background:#fff;border:3px solid #000;box-sizing:border-box"></div><div style="position:absolute;left:757px;top:481px;width:81.5px;height:31px;border:1px solid #ececec;border-radius:3px;box-sizing:border-box;background:#fefefe"></div><span id="t68" class="t " style="left:780.0px;top:490.9px;font-size:14.3px;color:#1b1b1b;letter-spacing:-0.713px;">Close</span></div>
<div style="position:absolute;left:994px;top:245px;width:249px;height:49px;background:#fff"></div>
<div style="position:absolute;left:994px;top:293.6px;width:240px;height:1.4px;background:#0a74d2"></div>
<div style="position:absolute;left:997.8px;top:249px;width:40.4px;height:40.8px;background:#005fb8;border-radius:4.500px;box-shadow:0 1px 1px rgba(0,0,0,.25)"></div>
<svg style="position:absolute;left:1011px;top:258px;" width="18" height="25" viewBox="0 0 18 25"><path d="M3 2.500v17.300l4.300-4 3 6.700 3-1.400-3-6.500h5.800z" fill="#fff" stroke="#000" stroke-width="1.200" stroke-linejoin="round"/></svg>
<div style="position:absolute;left:1045.5px;top:249px;width:40.6px;height:40.8px;background:#fff;border:1px solid #e9e9e9;border-bottom-color:#d4d4d4;border-radius:4.500px;box-sizing:border-box"></div>
<div style="position:absolute;left:1093.5px;top:249px;width:40.6px;height:40.8px;background:#fff;border:1px solid #e9e9e9;border-bottom-color:#d4d4d4;border-radius:4.500px;box-sizing:border-box"></div>
<div style="position:absolute;left:1141.5px;top:249px;width:40.6px;height:40.8px;background:#fff;border:1px solid #e9e9e9;border-bottom-color:#d4d4d4;border-radius:4.500px;box-sizing:border-box"></div>
<div style="position:absolute;left:1189.5px;top:249px;width:40.6px;height:40.8px;background:#fff;border:1px solid #e9e9e9;border-bottom-color:#d4d4d4;border-radius:4.500px;box-sizing:border-box"></div>
<svg style="position:absolute;left:1055.7px;top:257.7px;" width="21" height="27" viewBox="0 0 21 27"><g fill="none" stroke="#111" stroke-width="1.100"><rect x=".55" y=".55" width="19.700" height="14.400"/><path d="M3 4h12M3 6.400h12M3 8.800h12M3 11.200h8.500" stroke-width="1.050" stroke="#000"/><path d="M10.400 15v9.300M6 20.200l4.400 4.400 4.400-4.400"/></g></svg>
<svg style="position:absolute;left:1104.6px;top:257.7px;" width="21" height="27" viewBox="0 0 21 27"><g fill="none" stroke="#111" stroke-width="1.100"><rect x=".55" y=".55" width="19.700" height="14.400"/><path d="M3 4h12M3 6.400h12M3 8.800h12M3 11.200h8.500" stroke-width="1.050" stroke="#000"/><path d="M10.400 15v4.700"/><rect x="4.500" y="19.700" width="10.900" height="6.300"/></g></svg>
<svg style="position:absolute;left:1151.7px;top:257.7px;" width="21" height="16" viewBox="0 0 21 16"><g fill="none" stroke="#111" stroke-width="1.100"><rect x=".55" y=".55" width="19.700" height="14.400"/><path d="M3 4h12M3 6.400h12M3 8.800h12M3 11.200h8.500" stroke-width="1.050" stroke="#000"/></g></svg>
<svg style="position:absolute;left:1200px;top:255px;" width="20" height="29" viewBox="0 0 20 29"><path d="M9.900 1.300C7.500 6.500 1.200 12.500 1.200 18.500a8.700 8.700 0 0 0 17.400 0C18.600 12.500 12.300 6.500 9.900 1.300z" fill="none" stroke="#111" stroke-width="1.100" stroke-width="1.200"/></svg>
<div style="position:absolute;left:1229px;top:294.5px;width:14px;height:688px;background:#fff"></div>
<div style="position:absolute;left:1235px;top:520.3px;width:2.2px;height:219px;background:#808080;border-radius:1px"></div>
<div style="position:absolute;left:298px;top:968.5px;width:945px;height:14px;background:#fff"></div>
<div style="position:absolute;left:618px;top:975px;width:292px;height:2.2px;background:#858585;border-radius:1px"></div>
<span id="t69" class="t " style="left:303.4px;top:994.6px;font-size:13.5px;color:#1b1b1b;letter-spacing:0.075px;">Reorder and Group</span>
<div style="position:absolute;left:298px;top:1013.8px;width:139.6px;height:2px;background:#0a74d2"></div>
<div style="position:absolute;left:736px;top:987.3px;width:72.5px;height:80px;border:2.400px solid #434ba3;border-radius:3.500px;box-sizing:border-box"></div>
<div style="position:absolute;left:750px;top:996.3px;width:44px;height:49px;border:2.400px solid #434ba3;border-radius:3.500px;box-sizing:border-box"></div>
<div style="position:absolute;left:754.6px;top:1003.6px;width:34.8px;height:34.8px;background:#fb8411;border-radius:50%"></div>
<span id="t70" class="t " style="left:772.0px;top:1013.9px;font-size:14.5px;color:#fff;font-weight:700;transform:translateX(-50%);">3</span><div style="position:absolute;left:1262px;top:206px;width:318px;height:872px;background:#fbfbfb;border-radius:8px;box-shadow:0 2px 5px rgba(0,0,0,.14),0 0 1.500px rgba(0,0,0,.10)"></div>
<div style="position:absolute;left:1262px;top:206px;width:318px;height:30.5px;background:#f3f3f3;border-radius:8px 8px 0 0"></div>
<span id="t71" class="t " style="left:1270.6px;top:215.6px;font-size:13.5px;color:#1f1f1f;letter-spacing:0.176px;">Image Output Preview</span>
<svg style="position:absolute;left:1414px;top:216.5px;" width="11" height="11" viewBox="0 0 11 11"><circle cx="5.500" cy="5.500" r="4.600" fill="none" stroke="#333" stroke-width=".9"/><path d="M5.500 4.800v3.400" stroke="#333" stroke-width="1"/><circle cx="5.500" cy="3.200" r=".6" fill="#333"/></svg>
<svg style="position:absolute;left:1504.5px;top:217.5px;" width="10" height="7" viewBox="0 0 10 7"><path d="M.8 1.300L4.800 5.300 8.800 1.300" fill="none" stroke="#878787" stroke-width="1.100"/></svg><svg style="position:absolute;left:1529.5px;top:215px;" width="12" height="12" viewBox="0 0 12 12"><g fill="none" stroke="#878787" stroke-width=".9" stroke-linejoin="round"><path d="M6.600 1.200l4.200 4.200-1.100.5-1.700 1.700-.4 2.400-1.300.9L2.100 6.600l.9-1.300 2.400-.4L7.100 3.200z"/><path d="M4.200 7.800L1 11"/></g></svg><svg style="position:absolute;left:1556px;top:216px;" width="10" height="10" viewBox="0 0 10 10"><path d="M.9.900l8.200 8.200M9.100.9L.9 9.100" fill="none" stroke="#878787" stroke-width="1.050"/></svg>
<div style="position:absolute;left:1270px;top:573px;width:302px;height:170px;overflow:hidden;background:#03101c"><svg width="302" height="170" style="position:absolute;left:0;top:0"><use href="#wp" width="302" height="170"/><use href="#smA" width="302" height="170"/><use href="#tb" width="302" height="170"/></svg><div style="position:absolute;left:109.2px;top:100px;width:21.8px;height:6.8px;border:1px solid #f5861f;box-sizing:border-box"></div><div style="position:absolute;left:131px;top:103px;width:8px;height:1px;background:#f5861f"></div><div style="position:absolute;left:137.8px;top:91px;width:22px;height:22px;background:#fb8411;border-radius:50%"></div></div>
<span id="t72" class="t " style="left:1418.8px;top:669.8px;font-size:10.6px;color:#fff;font-weight:700;transform:translateX(-50%);">3</span>
<div style="position:absolute;left:1592px;top:206px;width:318.5px;height:872px;background:#fbfbfb;border-radius:8px;box-shadow:0 2px 5px rgba(0,0,0,.14),0 0 1.500px rgba(0,0,0,.10)"></div>
<div style="position:absolute;left:1592px;top:206px;width:318.5px;height:30.5px;background:#f3f3f3;border-radius:8px 8px 0 0"></div>
<span id="t73" class="t " style="left:1600.4px;top:215.6px;font-size:13.5px;color:#1f1f1f;letter-spacing:0.107px;">Properties</span>
<svg style="position:absolute;left:1834.3px;top:217.5px;" width="10" height="7" viewBox="0 0 10 7"><path d="M.8 1.300L4.800 5.300 8.800 1.300" fill="none" stroke="#878787" stroke-width="1.100"/></svg><svg style="position:absolute;left:1859.5px;top:215px;" width="12" height="12" viewBox="0 0 12 12"><g fill="none" stroke="#878787" stroke-width=".9" stroke-linejoin="round"><path d="M6.600 1.200l4.200 4.200-1.100.5-1.700 1.700-.4 2.400-1.300.9L2.100 6.600l.9-1.300 2.400-.4L7.100 3.200z"/><path d="M4.200 7.800L1 11"/></g></svg><svg style="position:absolute;left:1886px;top:216px;" width="10" height="10" viewBox="0 0 10 10"><path d="M.9.900l8.200 8.200M9.100.9L.9 9.100" fill="none" stroke="#878787" stroke-width="1.050"/></svg>
<span id="t74" class="t " style="left:1605.4px;top:273.4px;font-size:13.4px;color:#1b1b1b;letter-spacing:0.373px;">Video and Audio</span>
<div style="position:absolute;left:1600px;top:293px;width:130px;height:2px;background:#0a74d2"></div>
<span id="t75" class="t " style="left:1605.4px;top:308.7px;font-size:13.4px;color:#1b1b1b;letter-spacing:0.058px;">Audio File:</span>
<span id="t76" class="t " style="left:1680.3px;top:308.7px;font-size:13.4px;color:#1b1b1b;letter-spacing:-0.572px;">3UDTYLJ8F0</span>
<span id="t77" class="t " style="left:1763.3px;top:311.5px;font-size:9.6px;color:#3b3f9c;letter-spacing:0.238px;border-bottom:1px solid #6d70b8;padding-bottom:.5px;">Edit Audio</span>
<span id="t78" class="t " style="left:1605.4px;top:340.5px;font-size:13.4px;color:#1b1b1b;letter-spacing:0.063px;">Counter Level</span>
<div style="position:absolute;left:1600px;top:360px;width:130px;height:2px;background:#0a74d2"></div>
<div style="position:absolute;left:1604px;top:376px;width:20px;height:20px;border:5px solid #005fb8;border-radius:50%;box-sizing:border-box;background:#fff"></div>
<span id="t79" class="t " style="left:1635.5px;top:379.2px;font-size:13.4px;color:#1b1b1b;letter-spacing:0.152px;">one</span>
<div style="position:absolute;left:1675px;top:376px;width:20px;height:20px;border:1px solid #8a8a8a;border-radius:50%;box-sizing:border-box;background:#f3f3f3"></div>
<span id="t80" class="t " style="left:1706.5px;top:379.2px;font-size:13.4px;color:#1b1b1b;letter-spacing:0.385px;">two</span>
<span id="t81" class="t " style="left:1605.3px;top:433.2px;font-size:12.6px;color:#1b1b1b;letter-spacing:-0.213px;">Text Box Styles</span>
<svg style="position:absolute;left:1704.5px;top:431.3px;" width="20" height="20" viewBox="0 0 20 20"><path d="M19.35 9.08L19.35 10.92L16.70 12.03L16.17 13.30L17.27 15.96L15.96 17.27L13.30 16.17L12.03 16.70L10.92 19.35L9.08 19.35L7.97 16.70L6.70 16.17L4.04 17.27L2.73 15.96L3.83 13.30L3.30 12.03L0.65 10.92L0.65 9.08L3.30 7.97L3.83 6.70L2.73 4.04L4.04 2.73L6.70 3.83L7.97 3.30L9.08 0.65L10.92 0.65L12.03 3.30L13.30 3.83L15.96 2.73L17.27 4.04L16.17 6.70L16.70 7.97Z" fill="none" stroke="#111" stroke-width="1.150" stroke-linejoin="round"/><circle cx="10" cy="10" r="2.300" fill="none" stroke="#111" stroke-width="1.100"/></svg>
<div style="position:absolute;left:1600px;top:453.2px;width:130px;height:2px;background:#0a74d2"></div>
<div style="position:absolute;left:1605px;top:460px;width:200px;height:60px;border:1px solid #adadad;box-sizing:border-box;background:linear-gradient(#f1f1f1,#e4e4e4)"></div>
<div style="position:absolute;left:1614px;top:466px;width:160px;height:45px;border:2px solid #fb8411;box-sizing:border-box;background:#fff"></div>
<div style="position:absolute;left:1622.8px;top:478px;width:20px;height:20px;background:#fb8411;border-radius:50%"></div>
<span id="t82" class="t " style="left:1632.8px;top:482.3px;font-size:11.5px;color:#fff;transform:translateX(-50%);">2</span>
<span id="t83" class="t " style="left:1648.6px;top:483.5px;font-size:9.8px;color:#111;letter-spacing:-0.123px;">Counter</span>
<svg style="position:absolute;left:1792.5px;top:487px;" width="8" height="6" viewBox="0 0 8 6"><path d="M.8 1l3.100 3.200L7 1" fill="none" stroke="#333" stroke-width="1.100"/></svg>
<svg style="position:absolute;left:1601.4px;top:531.6px;" width="20" height="20" viewBox="0 0 20 20"><circle cx="10" cy="10" r="9" fill="none" stroke="#222" stroke-width="1"/><path d="M6.300 8.200l3.700 3.700 3.700-3.700" fill="none" stroke="#222" stroke-width="1.400"/></svg>
<span id="t84" class="t " style="left:1625.2px;top:535.2px;font-size:13.6px;color:#1b1b1b;letter-spacing:0.084px;">Override</span>
<svg style="position:absolute;left:1601.4px;top:564.7px;" width="20" height="20" viewBox="0 0 20 20"><circle cx="10" cy="10" r="9" fill="none" stroke="#222" stroke-width="1"/><path d="M6.300 8.200l3.700 3.700 3.700-3.700" fill="none" stroke="#222" stroke-width="1.400"/></svg>
<span id="t85" class="t " style="left:1625.2px;top:568.3px;font-size:13.6px;color:#1b1b1b;letter-spacing:-0.021px;">Advanced</span>
<div style="position:absolute;left:1619px;top:1062.8px;width:228px;height:2px;background:#858585;border-radius:1px"></div>
<div style="position:absolute;left:0px;top:195px;width:1px;height:894px;background:#111"></div>
<div style="position:absolute;left:1920px;top:195px;width:1px;height:894px;background:#111"></div>
<div style="position:absolute;left:1921px;top:0px;width:1px;height:1089px;background:#fff"></div>
<div style="position:absolute;left:0px;top:35px;width:1px;height:3px;background:#111"></div>
<div style="position:absolute;left:1920px;top:34px;width:1.5px;height:4px;background:#111"></div>
<div style="position:absolute;left:0px;top:1087px;width:1922px;height:2px;background:#f8f8f8"></div>
</div>
</body></html>
